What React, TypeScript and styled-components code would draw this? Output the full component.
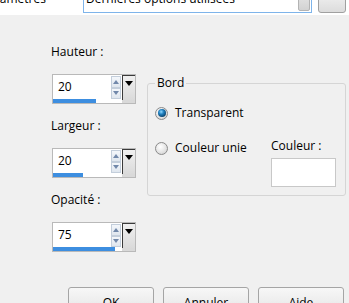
import React from 'react'
import styled, { createGlobalStyle } from 'styled-components'

const GlobalStyle = createGlobalStyle`
  html, body {
    margin: 0;
    padding: 0;
    background: #f0f0f0;
  }
  body {
    font-family: "Open Sans", "Noto Sans", "Liberation Sans", sans-serif;
    font-size: 12px;
    color: #000;
  }
`

const Dialog = styled.div`
  width: 349px;
  height: 303px;
  overflow: hidden;
  background: #f0f0f0;
`

const TopStrip = styled.div`
  height: 15px;
  overflow: hidden;
  background: #fff;
`

const TopRow = styled.div`
  display: flex;
  align-items: flex-start;
  margin-top: -10px;
  height: 25px;
`

const PresetLabel = styled.span`
  width: 102px;
  margin-left: -19px;
  padding-top: 1px;
  line-height: 16px;
  white-space: nowrap;
`

const PresetSelect = styled.div`
  box-sizing: border-box;
  display: flex;
  align-items: flex-start;
  width: 229px;
  height: 23px;
  padding: 0 1px 0 2px;
  border: 1px solid #7eb4ea;
  background: #fff;
  line-height: 16px;
`

const SelectText = styled.span`
  flex: 1;
  white-space: nowrap;
  overflow: hidden;
`

const SelectArrow = styled.span`
  width: 12px;
  height: 20px;
  box-sizing: border-box;
  border: 1px solid #b3b3b3;
  border-radius: 2px;
  background: linear-gradient(#e8e8e8, #d2d2d2);
`

const PresetButton = styled.div`
  box-sizing: border-box;
  width: 28px;
  height: 23px;
  margin-left: 6px;
  border: 1px solid #a0a0a0;
  border-radius: 3px;
  background: linear-gradient(#f4f4f4, #dcdcdc);
`

const Main = styled.div`
  display: flex;
  align-items: flex-start;
`

const LeftColumn = styled.div`
  display: flex;
  flex-direction: column;
  gap: 14px;
  padding: 29px 0 0 51px;
`

const Field = styled.div`
  display: flex;
  flex-direction: column;
  gap: 14px;
`

const Label = styled.div`
  line-height: 16px;
  white-space: nowrap;
`

const SpinBox = styled.div`
  box-sizing: border-box;
  display: flex;
  width: 84px;
  height: 30px;
  margin-left: 1px;
  border: 1px solid #b9b9b9;
  background: #fff;
`

const SpinMain = styled.div`
  flex: 1;
  display: flex;
  flex-direction: column;
`

const SpinRow = styled.div`
  display: flex;
  height: 24px;
  padding-top: 1px;
  box-sizing: border-box;
`

const SpinValue = styled.span`
  flex: 1;
  padding: 3px 0 0 5px;
  line-height: 16px;
`

const Arrows = styled.div`
  display: flex;
  flex-direction: column;
  width: 10px;
  margin-right: 1px;
`

const ArrowBtn = styled.div<{ $up?: boolean }>`
  box-sizing: border-box;
  height: 12px;
  border: 1px solid #c3cedb;
  background: linear-gradient(#f4f7fb, #dfe6ee);
  display: flex;
  align-items: center;
  justify-content: center;
  &::after {
    content: '';
    border-left: 3px solid transparent;
    border-right: 3px solid transparent;
    ${p => (p.$up ? 'border-bottom: 4px solid #7188aa;' : 'border-top: 4px solid #7188aa;')}
  }
`

const BarTrack = styled.div`
  height: 4px;
`

const Bar = styled.div`
  height: 4px;
  background: #3d8ee0;
`

const DropBtn = styled.div`
  box-sizing: border-box;
  width: 13px;
  display: flex;
  flex-direction: column;
  background: #d9d9d9;
`

const DropFace = styled.div`
  box-sizing: border-box;
  height: 25px;
  border-left: 1px solid #3a3a3a;
  border-top: 1px solid #3a3a3a;
  background: linear-gradient(#f0f0f0, #dadada);
  display: flex;
  justify-content: center;
  padding-top: 5px;
  &::after {
    content: '';
    width: 0;
    height: 0;
    border-left: 4px solid transparent;
    border-right: 4px solid transparent;
    border-top: 5px solid #000;
  }
`

const Group = styled.fieldset`
  box-sizing: border-box;
  width: 199px;
  height: 121px;
  margin: 60px 0 0 11px;
  padding: 0 9px 8px 7px;
  border: 1px solid #d5d5d5;
  border-radius: 3px;
  display: flex;
  align-items: flex-start;
`

const Legend = styled.legend`
  padding: 0 2px;
  line-height: 16px;
`

const RadioList = styled.div`
  display: flex;
  flex-direction: column;
  gap: 15px;
  padding-top: 12px;
`

const RadioRow = styled.label`
  display: flex;
  align-items: center;
  gap: 7px;
  height: 20px;
  line-height: 16px;
  white-space: nowrap;
`

const RadioDot = styled.span<{ $checked?: boolean }>`
  box-sizing: border-box;
  width: 13px;
  height: 13px;
  border-radius: 50%;
  border: 1px solid #8a8a8a;
  background: radial-gradient(circle at 40% 35%, #ffffff 0, #e4e4e4 55%, #c8c8c8 100%);
  display: flex;
  align-items: center;
  justify-content: center;
  &::after {
    content: '';
    display: ${p => (p.$checked ? 'block' : 'none')};
    width: 8px;
    height: 8px;
    border-radius: 50%;
    background: radial-gradient(circle at 40% 35%, #8fd8ff 0, #1f7fbf 35%, #083557 85%);
  }
`

const ColorColumn = styled.div`
  display: flex;
  flex-direction: column;
  gap: 4px;
  margin-left: auto;
  padding-top: 47px;
`

const Swatch = styled.div`
  box-sizing: border-box;
  width: 65px;
  height: 29px;
  border: 1px solid #c8c8c8;
  background: #fff;
`

const Footer = styled.div`
  display: flex;
  gap: 9px;
  margin-top: 35px;
  padding-left: 68px;
`

const Button = styled.button`
  box-sizing: border-box;
  width: 86px;
  height: 26px;
  padding: 5px 0 0;
  border: 1px solid #a5a5a5;
  border-radius: 3px;
  background: linear-gradient(#f7f7f7, #e6e6e6);
  font: inherit;
  line-height: 16px;
  color: #000;
  text-align: center;
  vertical-align: top;
`

const spins = [
  { label: 'Hauteur :', value: 20, bar: 43 },
  { label: 'Largeur :', value: 20, bar: 30 },
  { label: 'Opacité :', value: 75, bar: 62 },
]

function Spin({ value, bar }: { value: number; bar: number }) {
  return (
    <SpinBox>
      <SpinMain>
        <SpinRow>
          <SpinValue>{value}</SpinValue>
          <Arrows>
            <ArrowBtn $up />
            <ArrowBtn />
          </Arrows>
        </SpinRow>
        <BarTrack>
          <Bar style={{ width: bar + 'px' }} />
        </BarTrack>
      </SpinMain>
      <DropBtn>
        <DropFace />
      </DropBtn>
    </SpinBox>
  )
}

export default function App() {
  return (
    <Dialog>
      <GlobalStyle />
      <TopStrip>
        <TopRow>
          <PresetLabel>Paramètres</PresetLabel>
          <PresetSelect>
            <SelectText>Dernières options utilisées</SelectText>
            <SelectArrow />
          </PresetSelect>
          <PresetButton />
        </TopRow>
      </TopStrip>
      <Main>
        <LeftColumn>
          {spins.map(s => (
            <Field key={s.label}>
              <Label>{s.label}</Label>
              <Spin value={s.value} bar={s.bar} />
            </Field>
          ))}
        </LeftColumn>
        <Group>
          <Legend>Bord</Legend>
          <RadioList>
            <RadioRow>
              <RadioDot $checked />
              Transparent
            </RadioRow>
            <RadioRow>
              <RadioDot />
              Couleur unie
            </RadioRow>
          </RadioList>
          <ColorColumn>
            <Label>Couleur :</Label>
            <Swatch />
          </ColorColumn>
        </Group>
      </Main>
      <Footer>
        <Button>OK</Button>
        <Button>Annuler</Button>
        <Button>Aide</Button>
      </Footer>
    </Dialog>
  )
}
